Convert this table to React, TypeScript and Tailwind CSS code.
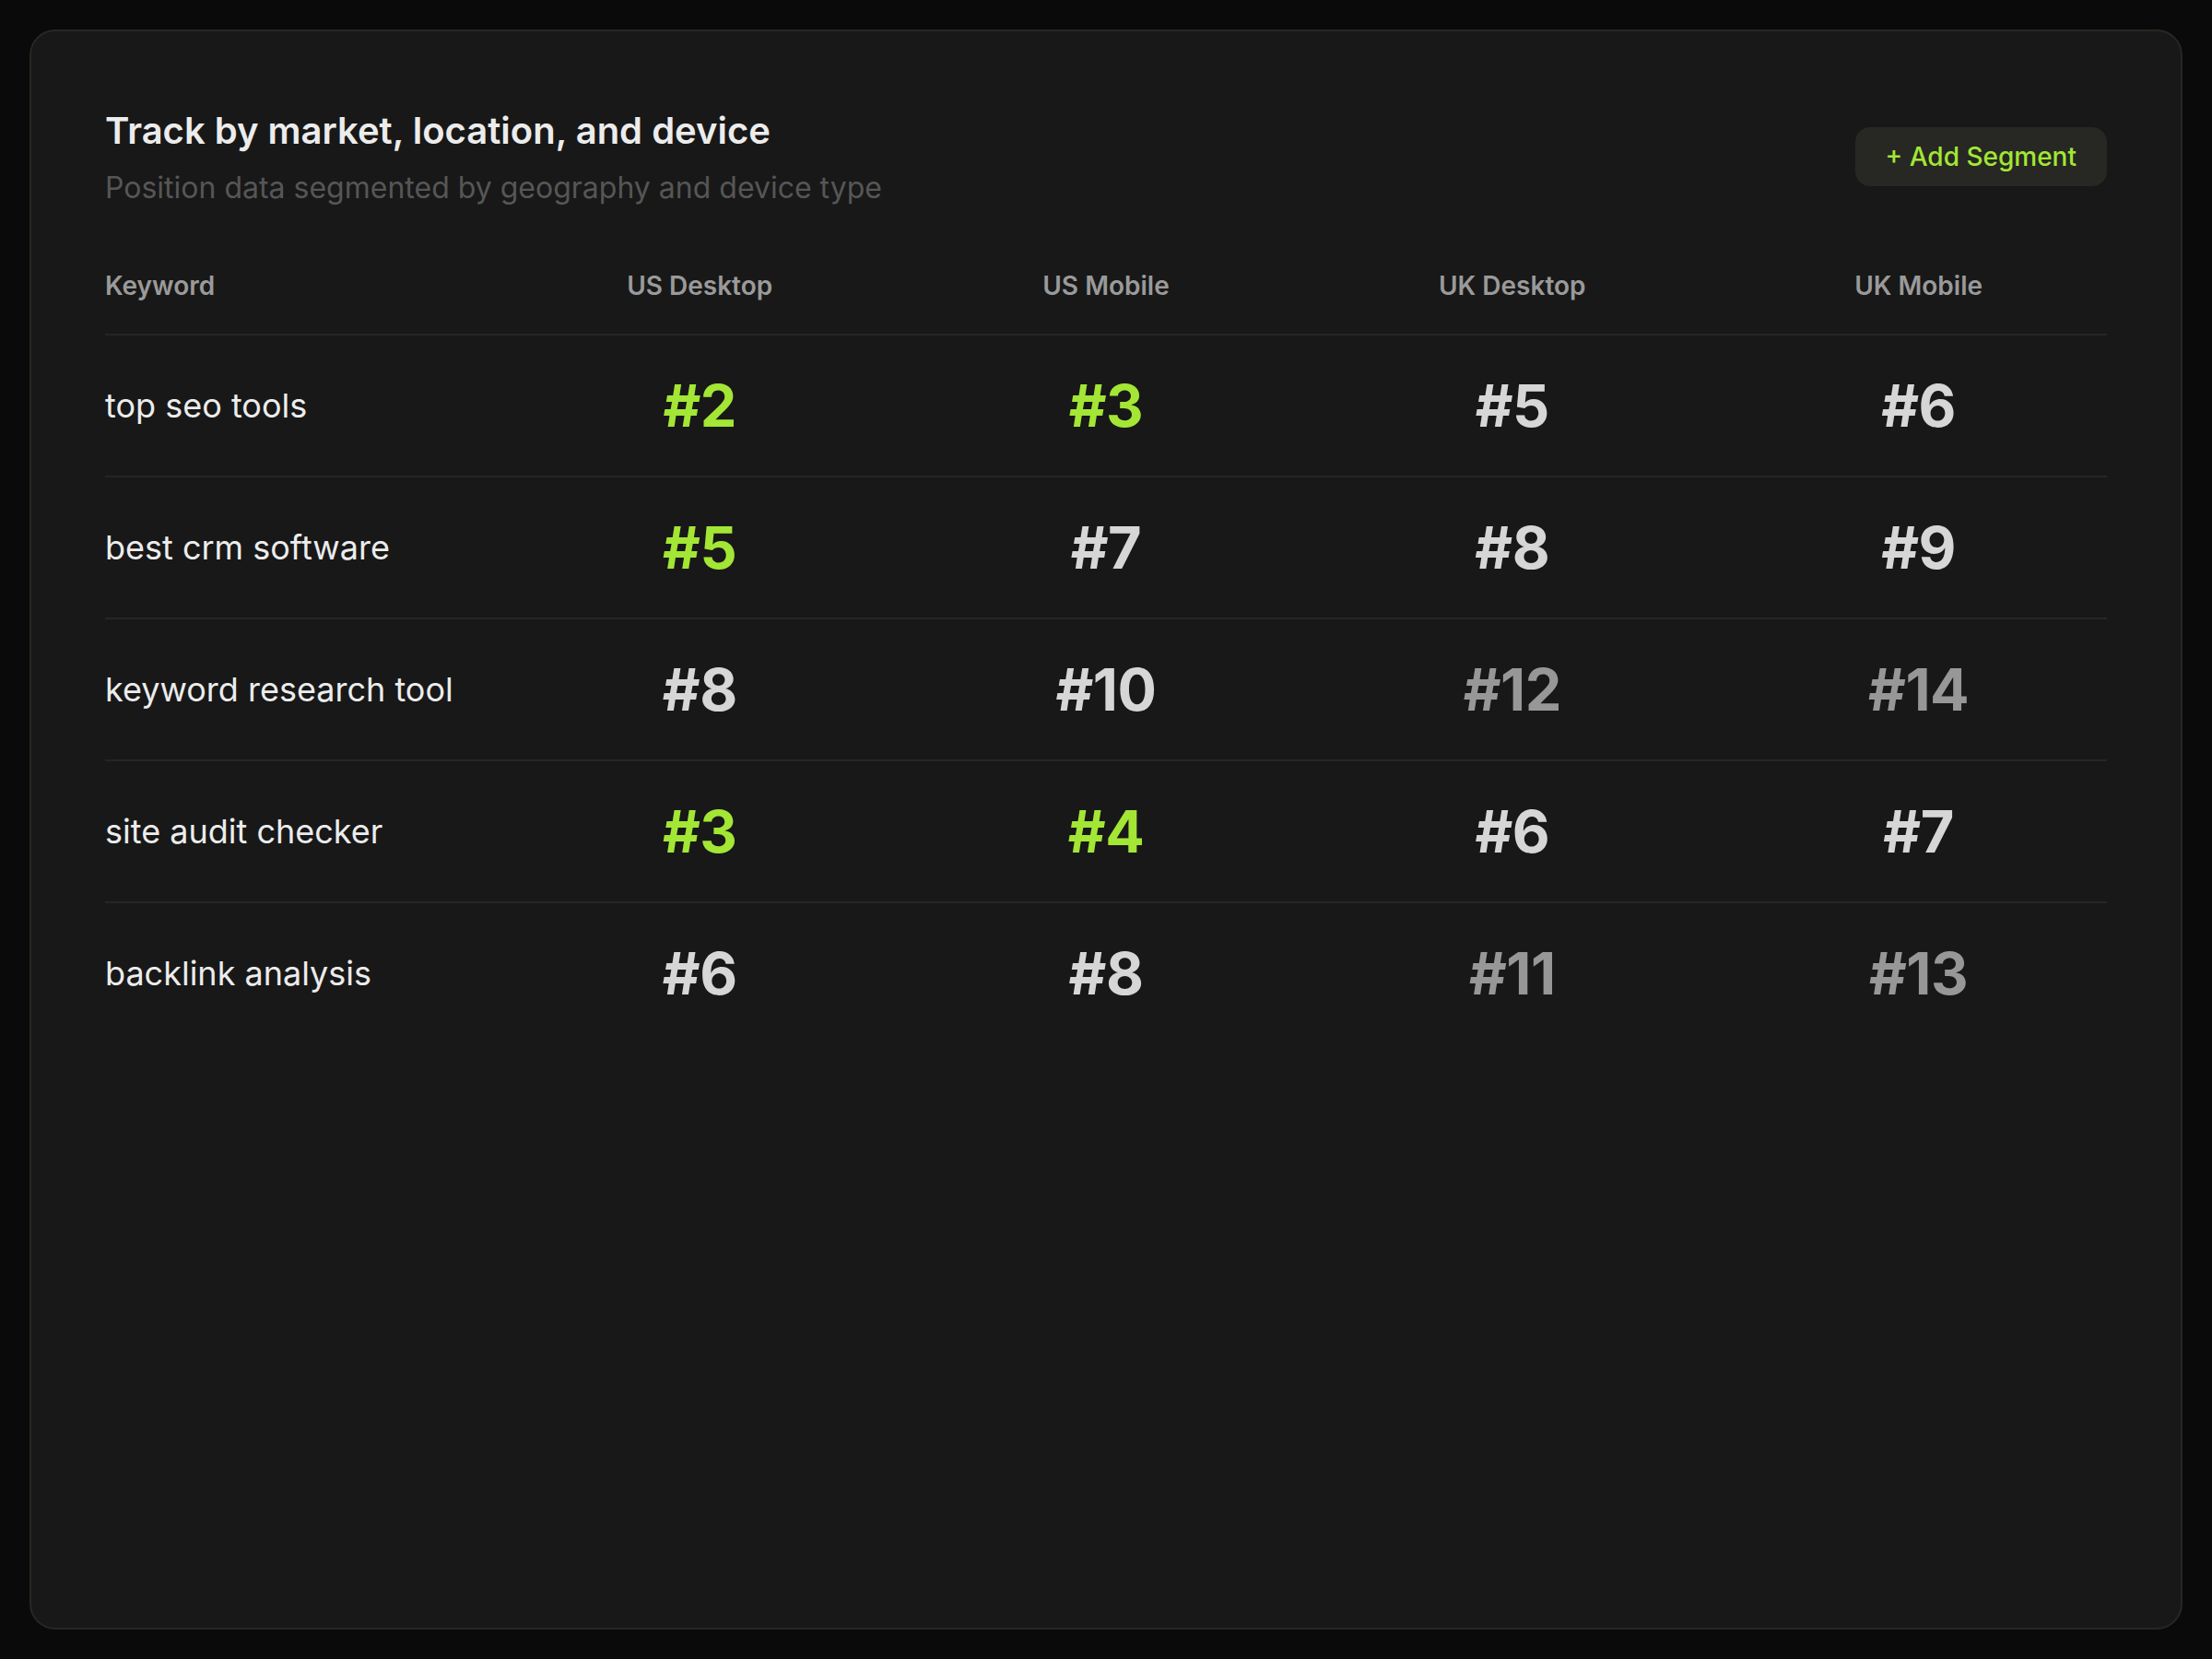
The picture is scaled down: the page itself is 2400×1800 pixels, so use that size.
type Cell = { rank: number; tone: 'top' | 'mid' | 'low' }

const columns = ['US Desktop', 'US Mobile', 'UK Desktop', 'UK Mobile']

const rows: { keyword: string; cells: Cell[] }[] = [
  {
    keyword: 'top seo tools',
    cells: [
      { rank: 2, tone: 'top' },
      { rank: 3, tone: 'top' },
      { rank: 5, tone: 'mid' },
      { rank: 6, tone: 'mid' },
    ],
  },
  {
    keyword: 'best crm software',
    cells: [
      { rank: 5, tone: 'top' },
      { rank: 7, tone: 'mid' },
      { rank: 8, tone: 'mid' },
      { rank: 9, tone: 'mid' },
    ],
  },
  {
    keyword: 'keyword research tool',
    cells: [
      { rank: 8, tone: 'mid' },
      { rank: 10, tone: 'mid' },
      { rank: 12, tone: 'low' },
      { rank: 14, tone: 'low' },
    ],
  },
  {
    keyword: 'site audit checker',
    cells: [
      { rank: 3, tone: 'top' },
      { rank: 4, tone: 'top' },
      { rank: 6, tone: 'mid' },
      { rank: 7, tone: 'mid' },
    ],
  },
  {
    keyword: 'backlink analysis',
    cells: [
      { rank: 6, tone: 'mid' },
      { rank: 8, tone: 'mid' },
      { rank: 11, tone: 'low' },
      { rank: 13, tone: 'low' },
    ],
  },
]

const toneClass = {
  top: 'text-[#a3e635]',
  mid: 'text-[#d6d6d6]',
  low: 'text-[#979797]',
}

export default function App() {
  return (
    <div className="flex h-screen flex-col bg-[#0a0a0a] p-[32px] font-['Inter','Liberation_Sans',sans-serif]">
      <div className="flex-1 rounded-[28px] border-2 border-[#272723] bg-[#181818] px-[80px] pt-[80px]">
        <div className="flex items-center justify-between">
          <div>
            <h2 className="text-[40px] font-semibold leading-[56px] text-[#ececec]">
              Track by market, location, and device
            </h2>
            <p className="mt-[10px] text-[32px] leading-[48px] text-[#565656]">
              Position data segmented by geography and device type
            </p>
          </div>
          <button className="mb-[2px] flex h-[64px] items-center rounded-[16px] bg-[#272723] px-[33px] text-[28px] font-medium text-[#a3e635]">
            + Add Segment
          </button>
        </div>

        <div className="mt-[62px]">
          <div className="grid grid-cols-5 gap-x-[32px] border-b-2 border-[#262622] pb-[32px] text-[28px] font-semibold leading-[40px] text-[#9a9a9a]">
            <div>Keyword</div>
            {columns.map((c) => (
              <div key={c} className="text-center">
                {c}
              </div>
            ))}
          </div>

          {rows.map((row, i) => (
            <div
              key={row.keyword}
              className={`grid grid-cols-5 items-center gap-x-[32px] py-[40px] ${
                i < rows.length - 1 ? 'border-b-2 border-[#262622]' : ''
              }`}
            >
              <div className="text-[36px] leading-[52px] text-[#ececec]">{row.keyword}</div>
              {row.cells.map((cell, j) => (
                <div
                  key={j}
                  className={`text-center text-[63px] font-bold leading-[72px] tracking-[-0.5px] ${toneClass[cell.tone]}`}
                >
                  #{cell.rank}
                </div>
              ))}
            </div>
          ))}
        </div>
      </div>
    </div>
  )
}
